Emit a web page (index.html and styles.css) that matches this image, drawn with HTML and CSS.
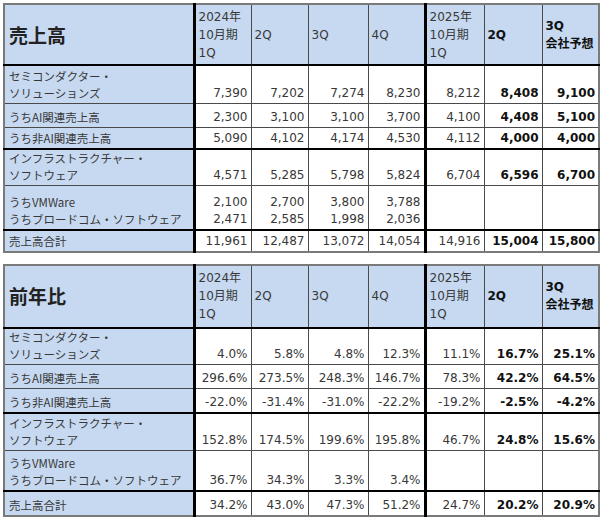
FILE: index.html
```html
<!DOCTYPE html>
<html lang="ja">
<head>
<meta charset="utf-8">
<link rel="stylesheet" href="styles.css">
</head>
<body>
<div class="page">
  <table class="tbl">
    <colgroup>
      <col class="w-label"><col class="w-57"><col class="w-57"><col class="w-60"><col class="w-57"><col class="w-59"><col class="w-58"><col class="w-57">
    </colgroup>
    <tr class="hd h61">
      <th class="title lab">売上高</th>
      <th>2024年<br>10月期<br>1Q</th><th>2Q</th><th>3Q</th><th class="vsep">4Q</th>
      <th>2025年<br>10月期<br>1Q</th><th class="b">2Q</th><th class="b">3Q<br>会社予想</th>
    </tr>
    <tr class="h38">
      <td class="lab">セミコンダクター・<br>ソリューションズ</td>
      <td>7,390</td><td>7,202</td><td>7,274</td><td class="vsep">8,230</td><td>8,212</td><td class="b">8,408</td><td class="b">9,100</td>
    </tr>
    <tr class="h24">
      <td class="lab">うちAI関連売上高</td>
      <td>2,300</td><td>3,100</td><td>3,100</td><td class="vsep">3,700</td><td>4,100</td><td class="b">4,408</td><td class="b">5,100</td>
    </tr>
    <tr class="h22 hsep">
      <td class="lab">うち非AI関連売上高</td>
      <td>5,090</td><td>4,102</td><td>4,174</td><td class="vsep">4,530</td><td>4,112</td><td class="b">4,000</td><td class="b">4,000</td>
    </tr>
    <tr class="h36">
      <td class="lab">インフラストラクチャー・<br>ソフトウェア</td>
      <td>4,571</td><td>5,285</td><td>5,798</td><td class="vsep">5,824</td><td>6,704</td><td class="b">6,596</td><td class="b">6,700</td>
    </tr>
    <tr class="h44 hsep">
      <td class="lab">うちVMWare<br>うちブロードコム・ソフトウェア</td>
      <td>2,100<br>2,471</td><td>2,700<br>2,585</td><td>3,800<br>1,998</td><td class="vsep">3,788<br>2,036</td><td></td><td></td><td></td>
    </tr>
    <tr class="h22">
      <td class="lab">売上高合計</td>
      <td>11,961</td><td>12,487</td><td>13,072</td><td class="vsep">14,054</td><td>14,916</td><td class="b">15,004</td><td class="b">15,800</td>
    </tr>
  </table>

  <table class="tbl">
    <colgroup>
      <col class="w-label"><col class="w-57"><col class="w-57"><col class="w-60"><col class="w-57"><col class="w-59"><col class="w-58"><col class="w-57">
    </colgroup>
    <tr class="hd h63">
      <th class="title lab">前年比</th>
      <th>2024年<br>10月期<br>1Q</th><th>2Q</th><th>3Q</th><th class="vsep">4Q</th>
      <th>2025年<br>10月期<br>1Q</th><th class="b">2Q</th><th class="b">3Q<br>会社予想</th>
    </tr>
    <tr class="h37">
      <td class="lab">セミコンダクター・<br>ソリューションズ</td>
      <td>4.0%</td><td>5.8%</td><td>4.8%</td><td class="vsep">12.3%</td><td>11.1%</td><td class="b">16.7%</td><td class="b">25.1%</td>
    </tr>
    <tr class="h24">
      <td class="lab">うちAI関連売上高</td>
      <td>296.6%</td><td>273.5%</td><td>248.3%</td><td class="vsep">146.7%</td><td>78.3%</td><td class="b">42.2%</td><td class="b">64.5%</td>
    </tr>
    <tr class="h24 hsep">
      <td class="lab">うち非AI関連売上高</td>
      <td>-22.0%</td><td>-31.4%</td><td>-31.0%</td><td class="vsep">-22.2%</td><td>-19.2%</td><td class="b">-2.5%</td><td class="b">-4.2%</td>
    </tr>
    <tr class="h38">
      <td class="lab">インフラストラクチャー・<br>ソフトウェア</td>
      <td>152.8%</td><td>174.5%</td><td>199.6%</td><td class="vsep">195.8%</td><td>46.7%</td><td class="b">24.8%</td><td class="b">15.6%</td>
    </tr>
    <tr class="h40 hsep">
      <td class="lab">うちVMWare<br>うちブロードコム・ソフトウェア</td>
      <td>36.7%</td><td>34.3%</td><td>3.3%</td><td class="vsep">3.4%</td><td></td><td></td><td></td>
    </tr>
    <tr class="h25">
      <td class="lab">売上高合計</td>
      <td>34.2%</td><td>43.0%</td><td>47.3%</td><td class="vsep">51.2%</td><td>24.7%</td><td class="b">20.2%</td><td class="b">20.9%</td>
    </tr>
  </table>
</div>
</body>
</html>
```

FILE: styles.css
```css
html, body {
  margin: 0;
  padding: 0;
  background: #ffffff;
}

.page {
  padding: 3px 0 0 3px;
  display: flex;
  flex-direction: column;
  gap: 11px;
}

.tbl {
  border-collapse: collapse;
  table-layout: fixed;
  width: 596px;
  border: 2px solid #7a7a7a;
  font-family: "DejaVu Sans", "Noto Sans CJK JP", sans-serif;
  font-size: 12px;
  line-height: 17px;
  color: #383838;
}

.w-label { width: 190px; }
.w-57 { width: 57px; }
.w-58 { width: 58px; }
.w-59 { width: 59px; }
.w-60 { width: 60px; }

.tbl th,
.tbl td {
  border: 1px solid #4a4a4a;
  padding: 0 3px 1px 3px;
  overflow: hidden;
  white-space: nowrap;
}

.tbl td {
  text-align: right;
  vertical-align: bottom;
  background: #ffffff;
}

.tbl th {
  background: #c6d9f0;
  text-align: left;
  vertical-align: middle;
  font-weight: normal;
  line-height: 18px;
  padding-bottom: 0;
  border-bottom: 2px solid #000000;
}

.tbl .lab {
  background: #c6d9f0;
  text-align: left;
  vertical-align: bottom;
  border-right: 3px solid #000000;
  font-family: "Noto Sans CJK JP", "DejaVu Sans", sans-serif;
  font-size: 11.5px;
  line-height: 17px;
  padding-left: 4px;
}

.tbl th.title {
  font-family: "Noto Sans CJK JP", sans-serif;
  font-weight: 700;
  font-size: 19px;
  line-height: 24px;
  vertical-align: middle;
  color: #222222;
}

.tbl .vsep {
  border-right: 3px solid #000000;
}

.tbl .b {
  font-weight: bold;
  color: #111111;
}

.tbl tr.hsep td {
  border-bottom: 2px solid #000000;
}

.h22 { height: 22px; }
.h24 { height: 24px; }
.h25 { height: 25px; }
.h36 { height: 36px; }
.h37 { height: 37px; }
.h38 { height: 38px; }
.h40 { height: 40px; }
.h44 { height: 44px; }
.h61 { height: 61px; }
.h63 { height: 63px; }
```
